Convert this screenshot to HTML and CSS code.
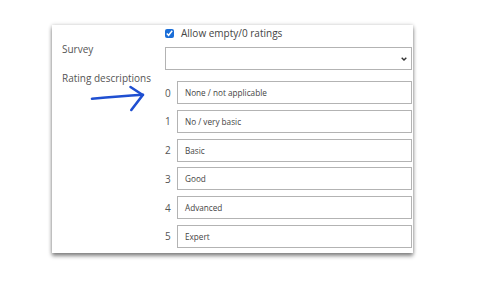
FILE: index.html
```html
<!DOCTYPE html>
<html lang="en">
<head>
    <meta charset="UTF-8">
    <meta name="viewport" content="width=device-width, initial-scale=1.0">
    <title>Rating settings</title>
    <link rel="stylesheet" href="styles.css">
</head>
<body>
    <div class="card">
        <!-- Allow empty -->
        <div class="field">
            <div class="label"></div>
            <label class="check">
                <input type="checkbox" checked>
                <span>Allow empty/0 ratings</span>
            </label>
        </div>

        <!-- Survey -->
        <div class="field">
            <div class="label">Survey</div>
            <div class="select">
                <svg class="chev" width="6" height="4" viewBox="0 0 6 4">
                    <path d="M0.7 0.7 L3 3 L5.3 0.7" fill="none" stroke="#333" stroke-width="1.4"/>
                </svg>
            </div>
        </div>

        <!-- Rating descriptions -->
        <div class="field">
            <div class="label">Rating descriptions</div>
            <div class="ratings">
                <div class="rating"><span class="num">0</span><div class="input">None / not applicable</div></div>
                <div class="rating"><span class="num">1</span><div class="input">No / very basic</div></div>
                <div class="rating"><span class="num">2</span><div class="input">Basic</div></div>
                <div class="rating"><span class="num">3</span><div class="input">Good</div></div>
                <div class="rating"><span class="num">4</span><div class="input">Advanced</div></div>
                <div class="rating"><span class="num">5</span><div class="input">Expert</div></div>
            </div>
        </div>
    </div>

    <!-- hand drawn annotation -->
    <svg class="annot" width="480" height="283" viewBox="0 0 480 283">
        <path d="M92 98.7 C105 97.6 125 96 143 94.8" fill="none" stroke="#1f4fd1" stroke-width="2.6" stroke-linecap="round"/>
        <path d="M130.5 87 L142.8 95 L131.3 110" fill="none" stroke="#1f4fd1" stroke-width="2.6" stroke-linecap="round" stroke-linejoin="round"/>
    </svg>
</body>
</html>
```

FILE: styles.css
```css
/* Global Styles */
body {
    margin: 0;
    padding: 25px 0 30px 52px;
    font-family: 'Open Sans', sans-serif;
    background: #fff;
    color: #555;
}

.card {
    box-sizing: border-box;
    width: 361px;
    height: 228px;
    padding: 1px 1px 0 10px;
    background: #fff;
    box-shadow: 0 3px 4px rgba(0, 0, 0, 0.45), 0 0 4px rgba(0, 0, 0, 0.2);
}

.field {
    display: grid;
    grid-template-columns: 103px 1fr;
}

.field + .field {
    margin-top: 2px;
}

.field:last-child {
    margin-top: 1px;
}

.label {
    font-size: 10px;
    line-height: 14px;
    color: #555;
}

/* Checkbox */
.check {
    display: flex;
    align-items: center;
    gap: 7px;
    height: 14px;
    font-size: 10px;
    color: #444;
}

.check input {
    width: 9px;
    height: 9px;
    margin: 0;
    accent-color: #1a6ed8;
}

/* Select */
.select {
    box-sizing: border-box;
    height: 23px;
    margin-top: 5px;
    border: 1px solid #b3b3b3;
    display: flex;
    align-items: center;
    justify-content: flex-end;
    padding-right: 4px;
}

/* Ratings */
.ratings {
    display: flex;
    flex-direction: column;
    gap: 5.75px;
    padding-top: 10px;
}

.rating {
    display: flex;
    align-items: center;
}

.num {
    width: 12px;
    font-size: 10px;
    color: #555;
}

.input {
    box-sizing: border-box;
    flex: 1;
    height: 23px;
    border: 1px solid #b3b3b3;
    padding-left: 7px;
    font-size: 8.2px;
    line-height: 21px;
    color: #444;
}

/* Annotation */
.annot {
    position: absolute;
    left: 0;
    top: 0;
    pointer-events: none;
}
```
